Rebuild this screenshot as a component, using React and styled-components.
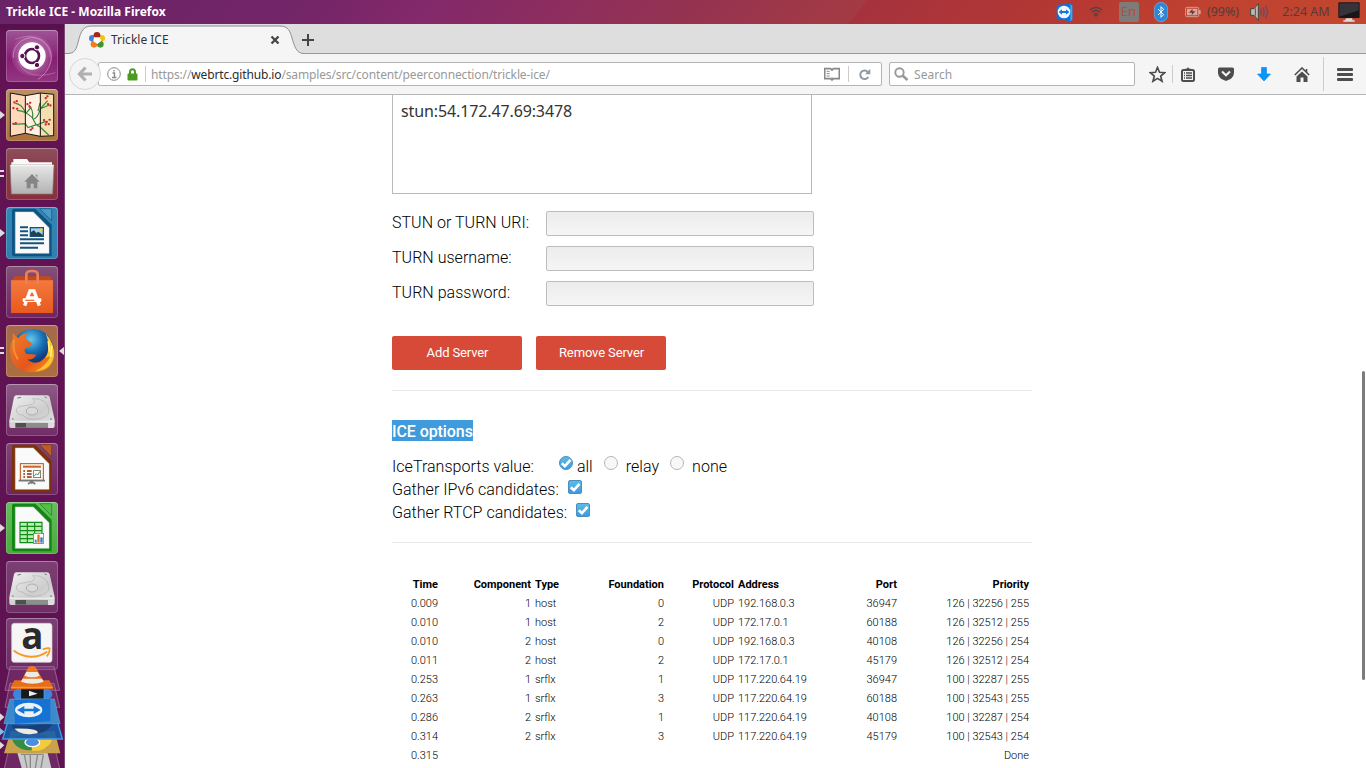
import React from "react";
import styled, { createGlobalStyle, css } from "styled-components";

const Global = createGlobalStyle`
  * { box-sizing: border-box; }
  html, body { margin: 0; padding: 0; overflow: hidden; background: #fff; }
  svg { display: block; flex: none; }
`;

const UI = `"Noto Sans", "Open Sans", sans-serif`;

const Desktop = styled.div`
  width: 1366px; height: 768px; overflow: hidden;
  display: flex; flex-direction: column;
`;
const TopPanel = styled.header`
  height: 24px; flex: none; display: flex; align-items: center; justify-content: space-between;
  padding: 0 0 0 6px;
  background: linear-gradient(130deg, #6b2368 0%, #732568 22%, #84296a 32%, #963350 51%, #a33b43 62.5%, #a5323e 62.7%, #b43833 77%, #c0432f 88%, #c2452f 100%);
`;
const WindowTitle = styled.span`
  font: 700 12px/24px ${UI}; color: #fff; letter-spacing: 0.03px; white-space: nowrap;
`;
const Tray = styled.div`display: flex; align-items: center; height: 24px;`;
const TrayItem = styled.div`
  display: flex; align-items: center; justify-content: center; width: ${(p) => p.$w}px;
  font: 400 12.5px/24px ${UI}; color: #583a3c; white-space: nowrap;
`;
const Lang = styled.span`
  width: 20px; height: 20px; border-radius: 2px; background: #7f7b79; color: #ba4a3c;
  font: 400 13.3px/19px ${UI}; text-align: center;
`;
const Body = styled.div`flex: 1; min-height: 0; display: flex;`;

const Launcher = styled.nav`
  width: 65px; flex: none; padding: 6px 0 0 6px; display: flex; flex-direction: column; gap: 7px;
  background: linear-gradient(180deg, #56104b 0, #611354 12px, #5f1251 100%);
  border-right: 1px solid #7f4a76; overflow: hidden;
`;
const Tile = styled.div`
  position: relative; width: 52px; height: 52px; flex: none; border-radius: 4px;
  background: ${(p) => p.$bg};
  box-shadow: inset 0 0 0 1px rgba(255,255,255,.2), inset 0 1px 0 rgba(255,255,255,.2);
  margin-top: ${(p) => p.$shift || 0}px;
`;
const TileArt = styled.svg`overflow: visible;`;
const Marker = styled.svg`position: absolute; left: ${(p) => (p.$right ? 53 : -6)}px; top: 21px;`;
const Stack = styled.svg`margin: -13px 0 0 -6px; position: relative;`;

const Browser = styled.main`flex: 1; min-width: 0; display: flex; flex-direction: column; background: #fff;`;
const TabStrip = styled.div`
  height: 30px; flex: none; display: flex; background: #dedede; border-bottom: 1px solid #999;
`;
const Tab = styled.div`
  position: relative; width: 235px; height: 30px; display: flex; align-items: center; padding: 2px 20px 0 24px;
`;
const TabShape = styled.svg`position: absolute; left: 0; top: 0;`;
const TabTitle = styled.span`
  position: relative; flex: 1; margin-left: 6px; font: 400 12px/20px ${UI}; color: #333;
`;
const Above = styled.span`position: relative; display: block;`;
const NavBar = styled.div`
  height: 41px; flex: none; display: flex; align-items: center; background: #f5f5f5; border-bottom: 1px solid #b6b6b6;
  padding-left: 4px;
`;
const BackButton = styled.div`
  width: 32px; height: 32px; border-radius: 50%; border: 1px solid #d8d8d8; background: #f4f4f4;
  display: flex; align-items: center; justify-content: center; position: relative; z-index: 1;
`;
const Field = styled.div`
  height: 24px; background: #fff; border: 1px solid #b4b4b4; border-radius: 2px; display: flex; align-items: center;
  width: ${(p) => p.$w}px; margin-left: ${(p) => p.$ml}px; padding-left: ${(p) => p.$pl}px; padding-right: ${(p) => p.$pr || 0}px;
  font: 400 12px/22px ${UI}; color: #999;
`;
const Url = styled.span`
  flex: 1; margin-left: 5px; padding-top: 1px; letter-spacing: ${(p) => p.$ls}px; white-space: nowrap;
  b { font-weight: 400; color: #2c2c2c; }
`;
const Divider = styled.span`width: 1px; height: ${(p) => p.$h || 16}px; background: #ccc; margin: ${(p) => p.$m || 0};`;
const ToolIcon = styled.span`display: flex; justify-content: center; width: ${(p) => p.$w}px;`;

const Page = styled.div`
  position: relative; flex: 1; overflow: hidden; padding-left: 327px; font: 300 16px/23px Roboto, sans-serif; color: #000;
`;
const Column = styled.div`width: 640px;`;
const ServerList = styled.div`
  width: 420px; height: 99px; border: 1px solid #b9b9b9; border-top: 0; padding: 5px 8px;
  font: 400 16px/23px ${UI}; color: #333; letter-spacing: -0.12px;
`;
const FormRow = styled.label`
  display: flex; align-items: flex-start; height: 25px; margin-bottom: 10px;
  span { width: 154px; line-height: 23px; letter-spacing: 0.03px; }
`;
const TextInput = styled.input`
  width: 268px; height: 25px; border: 1px solid #bdbdbd; border-radius: 2px; padding: 0; outline: 0;
  background: linear-gradient(180deg, #ececec, #f5f5f5);
`;
const Form = styled.div`padding-top: 17px;`;
const Buttons = styled.div`display: flex; gap: 14px; padding: 20px 0; height: 75px; border-bottom: 1px solid #eaeaea;`;
const RedButton = styled.button`
  width: 130px; height: 34px; border: 0; border-radius: 2px; background: #d84a38; color: #fff; padding: 0 0 0 1px;
  font: 400 13px/34px Roboto, sans-serif; letter-spacing: -0.12px;
`;
const Options = styled.section`height: 152px; border-bottom: 1px solid #eaeaea; padding-top: 29px;`;
const Heading = styled.h2`
  margin: 0 0 14px; font: 500 16px/21px Roboto, sans-serif; height: 21px; letter-spacing: -0.08px;
  span { display: inline-block; background: #3f9bdb; color: #fff; height: 21px; line-height: 23px; }
`;
const OptionRow = styled.div`display: flex; height: 23px; align-items: flex-start; letter-spacing: 0.03px;`;
const Opt = styled.span`margin-left: ${(p) => p.$ml}px; svg { margin-top: ${(p) => p.$mt || 0}px; }`;

const Table = styled.div`padding-top: 32px; font-size: 11px; line-height: 19px; color: #000;`;
const Row = styled.div`
  display: grid; height: 19px; white-space: nowrap;
  grid-template-columns: 46px 93px 4px 60px 69px 70px 4px 100px 59px 132px;
  ${(p) => p.$head && css`font-weight: 700;`}
`;
const Cell = styled.span`
  grid-column: ${(p) => p.$col}; text-align: ${(p) => (p.$left ? "left" : "right")};
`;
const Scroll = styled.div`
  position: absolute; right: 1px; top: 276px; width: 3px; height: 309px; border-radius: 2px; background: #7c7c7c;
`;

const S = ({ children, w = 52, h = 52, vb = "0 0 156 156" }) => (
  <TileArt width={w} height={h} viewBox={vb}>{children}</TileArt>
);

const UbuntuIcon = () => (
  <S>
    <defs><radialGradient id="ub"><stop offset="0" stopColor="#f1dced" stopOpacity=".9" /><stop offset="1" stopColor="#c884b8" stopOpacity=".15" /></radialGradient></defs>
    <circle cx="78" cy="76" r="62" fill="url(#ub)" />
    <path d="M22 84C18 42 66 5 110 32C150 62 142 116 96 148" fill="none" stroke="#d59bcb" strokeWidth="3" opacity=".7" />
    <path d="M28 28C84 2 134 40 132 80M36 92C50 132 90 146 148 128" fill="none" stroke="#d59bcb" strokeWidth="3" opacity=".45" />
    <circle cx="78" cy="78" r="41" fill="#fff" />
    <circle cx="78" cy="78" r="21" fill="none" stroke="#5a1150" strokeWidth="8" />
    <g stroke="#fff" strokeWidth="3" fill="#5a1150">
      <circle cx="49" cy="78" r="8" /><circle cx="93" cy="52" r="8" /><circle cx="93" cy="105" r="8" />
    </g>
  </S>
);
const MapIcon = () => {
  const berries = [[25, 40], [32, 36], [22, 57], [33, 59], [22, 104], [29, 102], [64, 45], [72, 41], [71, 53], [74, 122], [79, 117], [119, 27], [124, 22], [126, 45], [133, 49], [114, 93], [122, 98], [131, 92], [119, 106], [128, 105]];
  return (
    <S>
      <path d="M13 12L58 20V133L13 142Z" fill="#ffd9ba" /><path d="M58 20L103 12V142L58 133Z" fill="#fff0df" /><path d="M103 12L143 16V140L103 142Z" fill="#f3dfb0" />
      <path d="M128 138L100 112C88 110 87 100 79 86C65 74 55 66 33 64M58 70C50 52 42 44 28 43M24 106L58 104L66 116L91 107M80 86C82 68 78 58 68 47M60 73L76 54M83 90C98 86 98 70 104 58L125 35M96 66L102 42M103 59L130 48M91 109L116 98L124 101" fill="none" stroke="#39843c" strokeWidth="3.5" />
      <g fill="#c82f36">{berries.map(([x, y], i) => <rect key={i} x={x - 3} y={y - 3} width="6.500" height="6.500" rx="2" />)}</g>
      <path d="M13 12L58 20L103 12L143 16V140L103 142L58 133L13 142ZM58 20V133M103 12V142" fill="none" stroke="#151515" strokeWidth="3" />
    </S>
  );
};
const FolderIcon = () => (
  <S>
    <defs><linearGradient id="fo" x2="0" y2="1"><stop stopColor="#e7e7e7" /><stop offset="1" stopColor="#b2b2b2" /></linearGradient></defs>
    <path d="M16 54V43H22V33H63L70 43H138V54Z" fill="#fafafa" />
    <path d="M12 51H144L140 138H16Z" fill="url(#fo)" stroke="#8b7371" strokeWidth="2" /><path d="M13 52H143" stroke="#fff" strokeWidth="3" />
    <path d="M78 78L101 101H94V121H83V107H74V121H62V101H55ZM88 80H94V90Z" fill="#858585" />
  </S>
);
const DocShape = ({ dark, fold, children }) => (
  <S>
    <path d="M24 5H88L137 53V148H24Q18 148 18 142V11Q18 5 24 5Z" fill={dark} />
    <path d="M101 5H134Q137 5 137 9V41Z" fill={fold} stroke={dark} strokeWidth="2" />
    <path d="M28 15H82L129 62V139H28Z" fill="#fafafa" stroke="#d9d9d9" strokeWidth="1.5" />
    {children}
  </S>
);
const WriterIcon = () => (
  <DocShape dark="#0c5583" fold="#4e9ac7">
    <path d="M42 61H66M42 73H66M42 85H66M42 97H114M42 109H114M42 122H96" stroke="#16537c" strokeWidth="6" />
    <rect x="73" y="62" width="39" height="26" fill="#9bd6f4" stroke="#16537c" strokeWidth="4" />
    <path d="M75 87V75L84 70L91 78L97 74L110 83V87Z" fill="#263f4b" /><circle cx="105" cy="69" r="5" fill="#f5cd33" />
  </DocShape>
);
const SoftwareIcon = () => (
  <S>
    <defs><linearGradient id="so" x2="0" y2="1"><stop stopColor="#f3793f" /><stop offset="1" stopColor="#e95a1d" /></linearGradient></defs>
    <path d="M27 31H132L140 45H15Z" fill="#c64a19" /><path d="M15 43H141V141H15Z" fill="url(#so)" />
    <path d="M61 53V26Q61 15 76 15H80Q95 15 95 26V53" fill="none" stroke="#ee8058" strokeWidth="8" />
    <path d="M56 119L72 75H84L100 119M68 96H88" fill="none" stroke="#fff" strokeWidth="10" />
    <rect x="50" y="97" width="56" height="11" rx="3" fill="#fff" /><path d="M58 103H85" stroke="#f3713c" strokeWidth="4" />
  </S>
);
const FirefoxIcon = () => (
  <S>
    <defs>
      <radialGradient id="ffb" cx=".45" cy=".25"><stop stopColor="#66c9ed" /><stop offset=".6" stopColor="#1670b4" /><stop offset="1" stopColor="#123e80" /></radialGradient>
      <linearGradient id="fff" x2="1" y2="1"><stop stopColor="#ee7c28" /><stop offset=".6" stopColor="#e5571b" /><stop offset="1" stopColor="#f8a01f" /></linearGradient>
    </defs>
    <circle cx="80" cy="75" r="63" fill="url(#ffb)" />
    <path d="M20 25L37 40Q46 27 63 25L57 42Q72 48 78 56L70 65L56 71Q54 80 62 87Q76 88 91 89Q83 106 64 103Q80 119 102 110Q133 94 125 49Q147 82 143 99Q135 141 79 142Q17 138 12 82Q12 55 20 42Z" fill="url(#fff)" />
    <path d="M119 26Q146 53 144 93Q136 134 88 139Q124 121 133 93L117 100Q138 72 119 26Z" fill="#fbc52c" />
    <path d="M127 48L130 80M137 62L134 96" stroke="#fff184" strokeWidth="5" />
    <path d="M24 44Q18 78 36 103" fill="none" stroke="#f7a13d" strokeWidth="6" opacity=".7" />
  </S>
);
const DiskIcon = () => (
  <S>
    <defs><linearGradient id="di" x2="1" y2="1"><stop stopColor="#f0f0f0" /><stop offset=".6" stopColor="#cdcdcd" /><stop offset="1" stopColor="#e2e2e2" /></linearGradient></defs>
    <path d="M31 34H124Q129 34 131 40L146 108V125Q146 132 140 132H15Q10 132 10 126V108L24 40Q26 34 31 34Z" fill="url(#di)" />
    <path d="M11 112H145" stroke="#f1f1f1" strokeWidth="3" /><path d="M28 117H126V131H28Z" fill="#4d514f" /><path d="M60 117H126V131H60Z" fill="#8c8e8d" />
    <g fill="none" stroke="#b0b0b0" strokeWidth="2"><ellipse cx="78" cy="81" rx="17" ry="12" fill="#d9d9d9" stroke="#999" /><path d="M80 44Q124 42 129 78Q130 101 88 106Q61 107 51 93Q35 94 31 81Q31 69 45 67L75 62Q94 56 80 44" /></g>
    <path d="M34 42L45 40M116 39L122 41M18 105H23M132 105H138" stroke="#777" strokeWidth="3" />
  </S>
);
const ImpressIcon = () => (
  <DocShape dark="#7c3209" fold="#bb5e20">
    <rect x="43" y="62" width="69" height="50" fill="#fff8ee" stroke="#b24e16" strokeWidth="3" />
    <path d="M51 71H105" stroke="#c3662e" strokeWidth="6" /><path d="M52 84H57M52 93H57M52 102H57M63 84H77M63 93H77M63 102H77" stroke="#7a3516" strokeWidth="5" />
    <rect x="83" y="83" width="21" height="21" fill="#fff" stroke="#4b4b4b" strokeWidth="2" /><path d="M85 99L91 92L95 96L102 85" fill="none" stroke="#329d42" strokeWidth="3" />
    <path d="M38 113H117M77 113V122M66 123L77 116L88 123" fill="none" stroke="#777" strokeWidth="5" />
  </DocShape>
);
const CalcIcon = () => (
  <DocShape dark="#128612" fold="#53bd47">
    <rect x="42" y="60" width="66" height="63" fill="#b9eeb0" />
    <path d="M42 61H108V122H42ZM64 61V122M86 61V122M42 73H108M42 86H108M42 98H108M42 110H108" fill="none" stroke="#128b1b" strokeWidth="3.5" />
    <rect x="82" y="94" width="31" height="30" fill="#fff" stroke="#666" strokeWidth="2" />
    <path d="M86 113H92V122H86Z" fill="#4386c4" /><path d="M94 98H101V122H94Z" fill="#e96c18" /><path d="M103 106H110V122H103Z" fill="#307dc0" />
  </DocShape>
);
const AmazonText = styled.text`font: 700 110px "Open Sans", sans-serif;`;
const AmazonIcon = () => (
  <S>
    <rect x="17" y="16" width="121" height="117" rx="8" fill="#f6f6f6" stroke="#d5cbd4" strokeWidth="2" />
    <AmazonText x="46" y="93" fill="#2b2b2b">a</AmazonText>
    <path d="M25 99C55 121 93 122 122 102" fill="none" stroke="#f59a24" strokeWidth="6" strokeLinecap="round" />
    <path d="M110 94Q133 87 131 93Q131 106 122 115" fill="none" stroke="#f59a24" strokeWidth="5" />
  </S>
);
const FoldedStack = () => (
  <Stack width="65" height="104" viewBox="0 327 195 312">
    <g fill="#a272a0" fillOpacity=".24" stroke="#ad82a7" strokeWidth="2">
      <path d="M30 335H162L179 406H15Z" /><path d="M30 385H162L179 457H15Z" /><path d="M27 580H165L180 645H12Z" />
    </g>
    <path d="M51 590H142L154 639H65Z" fill="#c9c9c9" /><path d="M63 598H130M73 598L81 639M91 598V639M113 598L106 639M130 598L123 639" stroke="#8a8a8a" strokeWidth="4" />
    <path d="M32 529H164L181 595H12Z" fill="#c8a34b" /><path d="M36 552L96 532L110 586H80Q44 580 36 552Z" fill="#348c48" /><path d="M97 548L158 545Q154 576 116 587H95Z" fill="#f3cc3d" /><path d="M37 546L94 532L154 545L99 551Z" fill="#d84d3e" /><ellipse cx="97" cy="562" rx="22" ry="13" fill="#4c8ddd" stroke="#fff" strokeWidth="4" />
    <path d="M27 488H169L187 552H8Z" fill="#155eaa" fillOpacity=".9" stroke="#419ded" strokeWidth="4" />
    <path d="M39 515Q56 541 96 537Q139 535 154 505L134 519L64 514Z" fill="#eeeae2" /><path d="M38 510Q98 520 151 496L157 508Q142 532 112 536Q122 519 38 521Z" fill="#193f78" />
    <ellipse cx="98" cy="418" rx="59" ry="27" fill="#3b84df" />
    <path d="M62 400H132V433H62Z" fill="#171a1b" stroke="#5aa7e9" strokeWidth="2" /><path d="M87 407L113 416L87 424Z" fill="#eee" />
    <path d="M30 432H163L180 506H12Z" fill="#3c8aca" stroke="#62a7dd" strokeWidth="2" />
    <path d="M42 435L151 431V498L45 506Z" fill="#1673d4" /><ellipse cx="86" cy="465" rx="41" ry="22" fill="#e9f2f8" /><path d="M51 465L73 453V461H101V453L122 465L101 477V469H73V477Z" fill="#1876d3" />
    <path d="M43 376H148L160 398Q160 403 152 403H39Q31 403 32 397Z" fill="#e76e18" /><path d="M34 397H158" stroke="#f49a36" strokeWidth="4" />
    <path d="M84 338Q96 328 108 338L130 378Q97 392 64 378Z" fill="#f1791d" /><path d="M79 351H113L119 362Q97 372 73 362ZM68 371H126L131 380Q98 392 63 380Z" fill="#eeeae4" />
    <g fill="#ddd"><path d="M0 475L13 486L0 498Z" /><path d="M0 560L13 571L0 583Z" /><path d="M0 519L13 530L0 541Z" fill="#84bde8" /></g>
  </Stack>
);
const Mark = ({ type }) =>
  type === "two" ? <Marker width="6" height="10"><path d="M0 2H4M0 7H4" stroke="#ddd" strokeWidth="2" /></Marker>
    : <Marker width="6" height="10"><path d="M0 1L5 5L0 9Z" fill="#ddd" /></Marker>;

const tiles = [
  [UbuntuIcon, "linear-gradient(180deg,#9e5596,#881e74 55%,#933780)"],
  [MapIcon, "linear-gradient(180deg,#bd9065,#ad713c)", "one"],
  [FolderIcon, "linear-gradient(180deg,#8f4d5b,#883a46 50%,#86303c)", "two"],
  [WriterIcon, "linear-gradient(180deg,#3486b7,#307ead)", "one"],
  [SoftwareIcon, "linear-gradient(180deg,#835078,#6e2561)"],
  [FirefoxIcon, "linear-gradient(180deg,#a56a4c,#ad6d40)", "two"],
  [DiskIcon, "linear-gradient(180deg,#8d5a85,#712d66)"],
  [ImpressIcon, "linear-gradient(180deg,#7f4474,#702464)"],
  [CalcIcon, "linear-gradient(180deg,#66bd5f,#4aaa3e)", "one"],
  [DiskIcon, "linear-gradient(180deg,#7b4073,#712d66)"],
];

const Check = ({ round }) => (
  <svg width="14" height="14" viewBox="0 0 14 14">
    <defs><linearGradient id="ck" x2="0" y2="1"><stop stopColor="#5dbdea" /><stop offset="1" stopColor="#3f98dc" /></linearGradient></defs>
    <rect x=".5" y=".5" width="13" height="13" rx={round ? 6.5 : 1.5} fill="url(#ck)" stroke="#4a8fc0" />
    <path d="M2.800 7.200L5.900 10.200L11.500 3.800" fill="none" stroke="#fff" strokeWidth="2.600" />
  </svg>
);
const Radio = () => <svg width="14" height="14"><circle cx="7" cy="7" r="6.5" fill="#f8f8f8" stroke="#b5b5b5" /></svg>;

const rows = [
  ["0.009", "1", "host", "0", "UDP", "192.168.0.3", "36947", "126 | 32256 | 255"],
  ["0.010", "1", "host", "2", "UDP", "172.17.0.1", "60188", "126 | 32512 | 255"],
  ["0.010", "2", "host", "0", "UDP", "192.168.0.3", "40108", "126 | 32256 | 254"],
  ["0.011", "2", "host", "2", "UDP", "172.17.0.1", "45179", "126 | 32512 | 254"],
  ["0.253", "1", "srflx", "1", "UDP", "117.220.64.19", "36947", "100 | 32287 | 255"],
  ["0.263", "1", "srflx", "3", "UDP", "117.220.64.19", "60188", "100 | 32543 | 255"],
  ["0.286", "2", "srflx", "1", "UDP", "117.220.64.19", "40108", "100 | 32287 | 254"],
  ["0.314", "2", "srflx", "3", "UDP", "117.220.64.19", "45179", "100 | 32543 | 254"],
  ["0.315", "", "", "", "", "", "", "Done"],
];
const cols = [1, 2, 4, 5, 6, 8, 9, 10];
const TableRow = ({ cells, head }) => (
  <Row $head={head}>
    {cells.map((c, i) => <Cell key={i} $col={cols[i]} $left={i === 2 || i === 5}>{c}</Cell>)}
  </Row>
);

const SystemTray = () => (
  <Tray>
    <TrayItem $w={30}>
      <svg width="17" height="19" viewBox="0 0 51 57"><path d="M2 6L43 2L49 8V50L43 55L2 47Z" fill="#0874df" /><path d="M43 2L49 8V50L43 55Z" fill="#35a9f5" /><circle cx="24" cy="27" r="19" fill="#eef7fd" /><path d="M8 27L18 19V24H30V19L40 27L30 35V30H18V35Z" fill="#1479d6" /></svg>
    </TrayItem>
    <TrayItem $w={34}>
      <svg width="14" height="12" viewBox="0 0 42 36"><path d="M2 12Q21 -3 40 12M8 19Q21 8 34 19M14 26Q21 20 28 26" fill="none" stroke="#5b403f" strokeWidth="4" /><path d="M16 28L21 24L26 28L21 34Z" fill="#5b403f" /></svg>
    </TrayItem>
    <TrayItem $w={31}><Lang>En</Lang></TrayItem>
    <TrayItem $w={33}>
      <svg width="14" height="20" viewBox="0 0 42 60"><rect x="1" y="1" width="40" height="58" rx="20" fill="#2d87d8" stroke="#75b9eb" strokeWidth="2" /><path d="M12 21L29 38L21 46V14L29 22L12 39" fill="none" stroke="#fff" strokeWidth="3" /></svg>
    </TrayItem>
    <TrayItem $w={31}>
      <svg width="16" height="12" viewBox="0 0 48 36"><rect x="2" y="4" width="39" height="28" rx="3" fill="none" stroke="#d79b91" strokeWidth="3" /><path d="M6 8H37V28H6ZM42 13H47V24H42Z" fill="#dfa296" /><path d="M22 9L12 20H21L20 28L31 16H23Z" fill="#583e3d" /></svg>
    </TrayItem>
    <TrayItem $w={30}>(99%)</TrayItem>
    <TrayItem $w={42}>
      <svg width="19" height="20" viewBox="0 0 57 60"><path d="M2 20H12L25 5V55L12 40H2Z" fill="#bdbab2" stroke="#49433e" strokeWidth="3" /><path d="M16 19V41" stroke="#514c46" strokeWidth="3" /><path d="M31 20Q37 30 31 40M38 16Q47 30 38 44M46 12Q59 30 46 48" fill="none" stroke="#674d64" strokeWidth="4" /></svg>
    </TrayItem>
    <TrayItem $w={52}>2:24 AM</TrayItem>
    <TrayItem $w={34}>
      <svg width="22" height="20" viewBox="0 0 66 60"><rect x="1" y="1" width="64" height="47" rx="3" fill="#171719" /><path d="M4 4H62V25L4 44Z" fill="#36343a" /><path d="M24 49H42L44 55H50V59H16V55H22Z" fill="#ddd" /></svg>
    </TrayItem>
  </Tray>
);

const petals = [["#f4c20d", 38, 19], ["#43952b", 34, 37], ["#f47c20", 15, 37], ["#4385d4", 10, 19], ["#a52714", 24, 10]];

export default function App() {
  return (
    <Desktop>
      <Global />
      <TopPanel>
        <WindowTitle>Trickle ICE - Mozilla Firefox</WindowTitle>
        <SystemTray />
      </TopPanel>
      <Body>
        <Launcher>
          {tiles.map(([Icon, bg, mark], i) => (
            <Tile key={i} $bg={bg}>
              <Icon />
              {mark && <Mark type={mark} />}
              {i === 5 && <Marker $right width="6" height="10"><path d="M5 1L0 5L5 9Z" fill="#ddd" /></Marker>}
            </Tile>
          ))}
          <Tile $bg="linear-gradient(180deg,#7b4073,#6d2b63)" $shift={-2}><AmazonIcon /></Tile>
          <FoldedStack />
        </Launcher>
        <Browser>
          <TabStrip>
            <Tab>
              <TabShape width="240" height="30" viewBox="0 0 240 30">
                <path d="M0 29.5H3C12 29.5 12 21 14.5 13C17 5 20 2.5 27 2.5H215C223 2.5 225 7 227 14C229.500 22 231 29.500 239 29.500V30H0Z" fill="#f5f5f5" />
                <path d="M0 29.500H3C12 29.500 12 21 14.500 13C17 5 20 2 27 2H215C223 2 225 7 227 14C229.500 22 231 29.500 239 29.500" fill="none" stroke="#8e9399" />
              </TabShape>
              <Above><svg width="16" height="16" viewBox="0 0 48 48">
                {petals.map(([c, x, y]) => <circle key={c} cx={x} cy={y} r="10" fill={c} />)}
                <path d="M15 16H33L36 28L25 36L13 28Z" fill="#fff" />
              </svg></Above>
              <TabTitle>Trickle ICE</TabTitle>
              <Above><svg width="10" height="10" viewBox="0 0 10 10"><path d="M1.500 1.500L8.500 8.500M8.500 1.500L1.500 8.500" stroke="#444" strokeWidth="2.300" /></svg></Above>
            </Tab>
            <svg width="16" height="30"><path d="M8 10V22M2 16H14" stroke="#444" strokeWidth="2" /></svg>
          </TabStrip>
          <NavBar>
            <BackButton><svg width="16" height="16" viewBox="0 0 16 16"><path d="M8.500 1.500L2.500 8L8.500 14.500M3 8H15" fill="none" stroke="#b0b0b0" strokeWidth="3.200" /></svg></BackButton>
            <Field $w={784} $ml={-3} $pl={8} $pr={10}>
              <svg width="14" height="14" viewBox="0 0 14 14"><circle cx="7" cy="7" r="6.300" fill="none" stroke="#888" /><path d="M5.500 6H7.500V10.500M5 10.500H9.500M7 3V4.600" stroke="#888" fill="none" strokeWidth="1.400" /></svg>
              <ToolIcon $w={22}><svg width="11" height="13" viewBox="0 0 11 13"><path d="M3 6V4Q3 1.200 5.500 1.200T8 4V6" fill="none" stroke="#4b9b23" strokeWidth="2" /><rect x=".5" y="5.500" width="10" height="7" rx="1" fill="#4b9b23" /></svg></ToolIcon>
              <Divider $m="0 0 0 2px" />
              <Url $ls={-0.14}>https://<b>webrtc.github.io</b>/samples/src/content/peerconnection/trickle-ice/</Url>
              <svg width="16" height="14" viewBox="0 0 48 42"><path d="M2 5H20L24 9L28 5H46V35H29L24 39L19 35H2Z" fill="none" stroke="#888" strokeWidth="5" /><path d="M8 13H17M8 20H17M8 27H17M24 8V12M24 30V37" stroke="#888" strokeWidth="3" /></svg>
              <Divider $m="0 10px 0 8px" />
              <svg width="12" height="13" viewBox="0 0 36 39"><path d="M28 27A13 13 0 1 1 26 11" fill="none" stroke="#8d99a5" strokeWidth="6" /><path d="M34 2V19H18Z" fill="#8d99a5" /></svg>
            </Field>
            <Field $w={246} $ml={7} $pl={4}>
              <svg width="15" height="15" viewBox="0 0 15 15"><circle cx="5.500" cy="5.500" r="4.200" fill="none" stroke="#999" strokeWidth="1.900" /><path d="M8.500 8.500L13.500 13" stroke="#999" strokeWidth="2.500" /></svg>
              <Url $ls={0.06}>Search</Url>
            </Field>
            <ToolIcon $w={44}><svg width="17" height="17" viewBox="0 0 17 17"><path d="M8.500 1.500L10.500 6.300L15.700 6.700L11.700 10L13 15.200L8.500 12.400L4 15.200L5.300 10L1.300 6.700L6.500 6.300Z" fill="none" stroke="#4d4d4d" strokeWidth="1.700" /></svg></ToolIcon>
            <Divider $h={18} $m="0 0 0 -7px" />
            <ToolIcon $w={30}><svg width="14" height="15" viewBox="0 0 14 15"><path d="M4 3V1.800H5.500L7 .2L8.500 1.800H10V3Z" fill="#4d4d4d" /><rect x="1" y="3" width="12" height="11" rx="1.500" fill="none" stroke="#4d4d4d" strokeWidth="2" /><path d="M3 6H4M3 8.500H4M3 11H4M5 6H11M5 8.500H11M5 11H11" stroke="#4d4d4d" strokeWidth="1.300" /></svg></ToolIcon>
            <ToolIcon $w={46}><svg width="16" height="14" viewBox="0 0 16 14"><path d="M1.500 .5H14.500Q16 .5 16 2V6Q16 9.500 13 11.800L8 14L3 11.800Q0 9.500 0 6V2Q0 .5 1.500 .5Z" fill="#4d4d4d" /><path d="M4 4.500L8 8.300L12 4.500" fill="none" stroke="#f5f5f5" strokeWidth="2" /></svg></ToolIcon>
            <ToolIcon $w={30}><svg width="14" height="15" viewBox="0 0 14 15"><path d="M4.500 .5H9.500V7H13.500L7 14L.5 7H4.500Z" fill="#0996f8" stroke="#087de0" strokeWidth=".6" /></svg></ToolIcon>
            <ToolIcon $w={46}><svg width="16" height="15" viewBox="0 0 16 15"><path d="M.8 8L8 1L15.200 8M12.500 2V5" fill="none" stroke="#4d4d4d" strokeWidth="1.600" /><path d="M8 4.500L13.500 9.500V15H9.500V10.500H6.500V15H2.500V9.500Z" fill="#4d4d4d" /></svg></ToolIcon>
            <Divider $h={34} $m="0 13px 0 -2px" />
            <svg width="16" height="15"><path d="M1 2.500H15M1 7.500H15M1 12.500H15" stroke="#4d4d4d" strokeWidth="2.800" strokeLinecap="round" /></svg>
          </NavBar>
          <Page>
            <Column>
              <ServerList>stun:54.172.47.69:3478</ServerList>
              <Form>
                {["STUN or TURN URI:", "TURN username:", "TURN password:"].map((t) => (
                  <FormRow key={t}><span>{t}</span><TextInput /></FormRow>
                ))}
              </Form>
              <Buttons><RedButton>Add Server</RedButton><RedButton>Remove Server</RedButton></Buttons>
              <Options>
                <Heading><span>ICE options</span></Heading>
                <OptionRow>
                  <span>IceTransports value:</span>
                  <Opt $ml={25} $mt={1}><Check round /></Opt><Opt $ml={4}>all</Opt>
                  <Opt $ml={11} $mt={1}><Radio /></Opt><Opt $ml={8}>relay</Opt>
                  <Opt $ml={11} $mt={1}><Radio /></Opt><Opt $ml={8}>none</Opt>
                </OptionRow>
                <OptionRow><span>Gather IPv6 candidates:</span><Opt $ml={9} $mt={2}><Check /></Opt></OptionRow>
                <OptionRow><span>Gather RTCP candidates:</span><Opt $ml={9} $mt={2}><Check /></Opt></OptionRow>
              </Options>
              <Table>
                <TableRow head cells={["Time", "Component", "Type", "Foundation", "Protocol", "Address", "Port", "Priority"]} />
                {rows.map((r, i) => <TableRow key={i} cells={r} />)}
              </Table>
            </Column>
            <Scroll />
          </Page>
        </Browser>
      </Body>
    </Desktop>
  );
}
